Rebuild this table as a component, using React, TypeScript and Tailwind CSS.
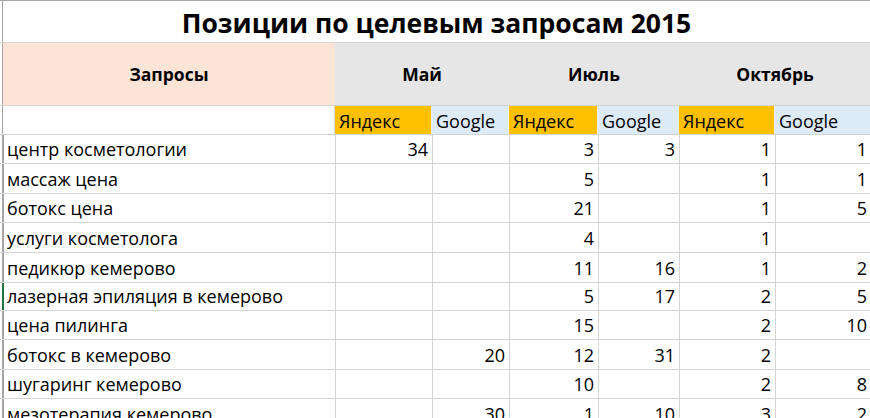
const rows: { q: string; v: (number | null)[]; h: string; mark?: boolean }[] = [
  { q: 'центр косметологии', v: [34, null, 3, 3, 1, 1], h: 'h-[29px]' },
  { q: 'массаж цена', v: [null, null, 5, null, 1, 1], h: 'h-[30px]' },
  { q: 'ботокс цена', v: [null, null, 21, null, 1, 5], h: 'h-[29px]' },
  { q: 'услуги косметолога', v: [null, null, 4, null, 1, null], h: 'h-[30px]' },
  { q: 'педикюр кемерово', v: [null, null, 11, 16, 1, 2], h: 'h-[30px]' },
  { q: 'лазерная эпиляция в кемерово', v: [null, null, 5, 17, 2, 5], h: 'h-[28px]', mark: true },
  { q: 'цена пилинга', v: [null, null, 15, null, 2, 10], h: 'h-[29px]' },
  { q: 'ботокс в кемерово', v: [null, 20, 12, 31, 2, null], h: 'h-[30px]' },
  { q: 'шугаринг кемерово', v: [null, null, 10, null, 2, 8], h: 'h-[29px]' },
  { q: 'мезотерапия кемерово', v: [null, 30, 1, 10, 3, 2], h: 'h-[30px]' },
];

const cols = 'grid grid-cols-[332px_97px_77px_89px_81px_96px_96px]';
const sub = ['Яндекс', 'Google', 'Яндекс', 'Google', 'Яндекс', 'Google'];

export default function App() {
  return (
    <div
      className="w-[870px] h-[418px] overflow-hidden bg-white text-black border-t border-[#a6a6a6]"
      style={{ fontFamily: '"Open Sans", "Liberation Sans", Arial, sans-serif' }}
    >
      {/* title */}
      <div className="pl-[2px] h-[41px]">
        <div className="h-full border-l border-[#a6a6a6] flex items-end justify-center pb-[6px]">
          <span className="text-[26.5px] font-bold leading-none">Позиции по целевым запросам 2015</span>
        </div>
      </div>

      {/* months */}
      <div className="pl-[2px] h-[63px] border-t border-[#d4d4d4]">
        <div className={`${cols} h-full border-l border-[#a6a6a6] text-[17.5px] font-bold`}>
          <div className="bg-[#fce4d6] flex items-center justify-center">Запросы</div>
          <div className="col-span-2 bg-[#e7e6e6] flex items-center justify-center">Май</div>
          <div className="col-span-2 bg-[#e7e6e6] flex items-center justify-center">Июль</div>
          <div className="col-span-2 bg-[#e7e6e6] flex items-center justify-center">Октябрь</div>
        </div>
      </div>

      {/* engines */}
      <div className="pl-[2px] h-[30px] border-t border-[#d4d4d4] border-b">
        <div className={`${cols} h-full border-l border-[#a6a6a6] text-[18px]`}>
          <div className="bg-white border-r border-[#d4d4d4]" />
          {sub.map((s, i) => (
            <div
              key={i}
              className={`flex items-end pl-[4px] pb-[4px] leading-none border-r border-[#ececec] ${
                s === 'Яндекс' ? 'bg-[#ffc000]' : 'bg-[#ddebf7]'
              }`}
            >
              {s}
            </div>
          ))}
        </div>
      </div>

      {/* data */}
      {rows.map((r) => (
        <div key={r.q} className={`pl-[2px] ${r.h} border-b border-[#d4d4d4]`}>
          <div
            className={`${cols} h-full border-l-2 ${r.mark ? 'border-[#217346]' : 'border-[#a6a6a6]'} text-[18px] leading-none`}
          >
            <div className="flex items-end pl-[3px] pb-[5px] border-r border-[#d4d4d4] whitespace-nowrap">{r.q}</div>
            {r.v.map((n, i) => (
              <div key={i} className="flex items-end justify-end pr-[4px] pb-[5px] border-r border-[#d4d4d4]">
                {n ?? ''}
              </div>
            ))}
          </div>
        </div>
      ))}
    </div>
  );
}
